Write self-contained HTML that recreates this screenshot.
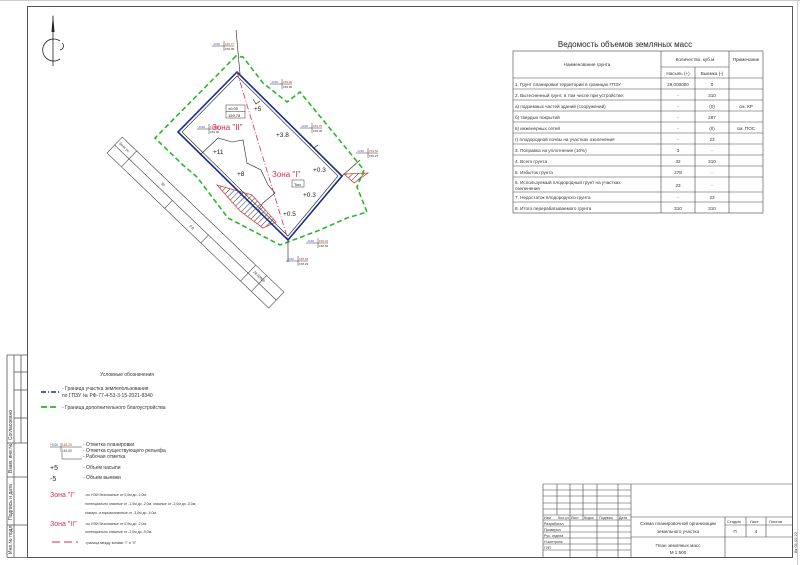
<!DOCTYPE html>
<html><head><meta charset="utf-8"><style>
html,body{margin:0;padding:0;background:#fff;}
svg{display:block;font-family:"Liberation Sans","DejaVu Sans",sans-serif;}
</style></head><body>
<svg width="800" height="565" viewBox="0 0 800 565" xmlns="http://www.w3.org/2000/svg">
<defs>
<pattern id="h" width="4" height="4" patternUnits="userSpaceOnUse" patternTransform="rotate(45)">
<line x1="0" y1="0" x2="0" y2="4" stroke="#333" stroke-width="1"/></pattern>
</defs>
<rect width="800" height="565" fill="#fff"/>
<line x1="0" y1="0.5" x2="800" y2="0.5" stroke="#ccc"/>
<line x1="797.5" y1="0" x2="797.5" y2="565" stroke="#ccc"/>
<rect x="27.5" y="6.5" width="765" height="551" fill="none" stroke="#555" stroke-width="1"/>
<g stroke="#555" stroke-width="0.8" fill="none">
<line x1="7" y1="355" x2="27" y2="355"/>
<line x1="7" y1="355" x2="7" y2="557"/>
<line x1="14" y1="355" x2="14" y2="557"/>
<line x1="21" y1="355" x2="21" y2="443"/>
<line x1="7" y1="557.5" x2="27" y2="557.5"/>
<line x1="14" y1="372" x2="27" y2="372"/>
<line x1="14" y1="390" x2="27" y2="390"/>
<line x1="14" y1="418" x2="27" y2="418"/>
<line x1="7" y1="443" x2="27" y2="443"/>
<line x1="7" y1="477" x2="27" y2="477"/>
<line x1="7" y1="525" x2="27" y2="525"/>
</g>
<g font-size="5" fill="#333">
<text transform="translate(12,440) rotate(-90)">Согласовано</text>
<text transform="translate(12,473) rotate(-90)">Взам. инв.№</text>
<text transform="translate(12,520) rotate(-90)">Подпись и дата</text>
<text transform="translate(12,554) rotate(-90)">Инв.№ подл.</text>
<text transform="translate(797,553) rotate(-90)" font-size="4">Вк 01.02.22</text>
</g>
<g stroke="#222" fill="none" stroke-width="0.8">
<line x1="53" y1="16" x2="53" y2="66"/>
<path d="M60,41 A11,11 0 1 0 60,59"/>
<path d="M62,43 A4,4 0 0 1 60,50"/>
</g>
<path d="M53,14 L51.5,32 L54.5,32 Z" fill="#222"/>

<text x="625" y="47" font-size="8" text-anchor="middle" fill="#222">Ведомость объемов земляных масс</text>
<g stroke="#444" stroke-width="0.6" fill="none">
<rect x="513" y="51" width="250" height="162"/>
<line x1="661" y1="51" x2="661" y2="213"/>
<line x1="729" y1="51" x2="729" y2="213"/>
<line x1="695" y1="67" x2="695" y2="213"/>
<line x1="661" y1="67" x2="729" y2="67"/>
<line x1="513" y1="78" x2="763" y2="78"/>
<line x1="513" y1="89" x2="763" y2="89"/>
<line x1="513" y1="100" x2="763" y2="100"/>
<line x1="513" y1="111" x2="763" y2="111"/>
<line x1="513" y1="122" x2="763" y2="122"/>
<line x1="513" y1="133" x2="763" y2="133"/>
<line x1="513" y1="144" x2="763" y2="144"/>
<line x1="513" y1="155" x2="763" y2="155"/>
<line x1="513" y1="166" x2="763" y2="166"/>
<line x1="513" y1="177" x2="763" y2="177"/>
<line x1="513" y1="192" x2="763" y2="192"/>
<line x1="513" y1="202" x2="763" y2="202"/>
</g>
<g font-size="4.6" fill="#333">
<text x="587" y="66" text-anchor="middle">Наименование грунта</text>
<text x="695" y="61" text-anchor="middle">Количество, куб.м</text>
<text x="746" y="61" text-anchor="middle">Примечание</text>
<text x="678" y="75" text-anchor="middle">Насыпь (+)</text>
<text x="712" y="75" text-anchor="middle">Выемка (-)</text>
<text x="515" y="86">1. Грунт планировки территории в границах ГПЗУ</text>
<text x="515" y="97">2. Вытесненный грунт, в том числе при устройстве:</text>
<text x="515" y="108">а) подземных частей зданий (сооружений)</text>
<text x="515" y="119">б) твердых покрытий</text>
<text x="515" y="130">в) инженерных сетей</text>
<text x="515" y="141">г) плодородной почвы на участках озеленения</text>
<text x="515" y="152">3. Поправка на уплотнение (10%)</text>
<text x="515" y="163">4. Всего грунта</text>
<text x="515" y="174">5. Избыток грунта</text>
<text x="515" y="184">6. Используемый плодородный грунт на участках</text>
<text x="515" y="190">озеленения</text>
<text x="515" y="199">7. Недостаток плодородного грунта</text>
<text x="515" y="210">8. Итого перерабатываемого грунта</text>
<g text-anchor="middle">
<text x="678" y="86">29,000000</text><text x="712" y="86">0</text>
<text x="678" y="97">-</text><text x="712" y="97">310</text>
<text x="678" y="108">-</text><text x="712" y="108">(0)</text><text x="746" y="108">см. КР</text>
<text x="678" y="119">-</text><text x="712" y="119">287</text>
<text x="678" y="130">-</text><text x="712" y="130">(0)</text><text x="746" y="130">см. ПОС</text>
<text x="678" y="141">-</text><text x="712" y="141">23</text>
<text x="678" y="152">3</text><text x="712" y="152">-</text>
<text x="678" y="163">32</text><text x="712" y="163">310</text>
<text x="678" y="174">278</text><text x="712" y="174">-</text>
<text x="678" y="187">23</text><text x="712" y="187">-</text>
<text x="678" y="199">-</text><text x="712" y="199">23</text>
<text x="678" y="210">310</text><text x="712" y="210">310</text>
</g></g>

<polygon points="217,185 252,195 276,222 263,228 240,211" fill="url(#h)" stroke="#e04040" stroke-width="0.8"/>
<polygon points="344,174 368,173 354,183" fill="url(#h)" stroke="#e04040" stroke-width="0.8"/>
<polygon points="236,56 155,138 183,165 197,177 228,218 280,245 320,230 347,218 367,212 357,187 364,170 300,92 287,102 263,83 243,57" fill="none" stroke="#2db52d" stroke-width="1.6" stroke-dasharray="5,3"/>
<polygon points="237,72 178,132 288,240 342,176" fill="none" stroke="#1a2a8a" stroke-width="1.6"/>
<g stroke="#222" stroke-width="0.6" fill="none">
<polygon points="237,76 182,132 288,236 338,176"/>
<polyline points="200,155 218,138 232,142 243,140 247,163 261,170 268,185 275,193 263,203 258,210"/>
<polyline points="253,99 256,104 260,101"/>
<polyline points="310,143 314,148 318,145"/>
<line x1="236" y1="30" x2="240" y2="74"/>
<line x1="288" y1="240" x2="288" y2="262"/>
<line x1="342" y1="176" x2="360" y2="160"/>
</g>
<line x1="237" y1="72" x2="288" y2="240" stroke="#d03060" stroke-width="0.8" stroke-dasharray="6,2,1,2"/>
<g transform="translate(107,153) rotate(43.8)" stroke="#444" stroke-width="0.6" fill="none">
<rect x="0" y="-22" width="224" height="22"/>
<line x1="0" y1="-11" x2="224" y2="-11"/>
<line x1="20" y1="-22" x2="20" y2="0"/>
<line x1="80" y1="-11" x2="80" y2="0"/>
<line x1="130" y1="-11" x2="130" y2="0"/>
<line x1="185" y1="-22" x2="185" y2="0"/>
<line x1="200" y1="-22" x2="200" y2="0"/>
<g font-size="3.5" fill="#333" stroke="none"><text x="2" y="-15">Зона уч.</text><text x="188" y="-15">28,00000</text><text x="60" y="-15">30</text><text x="110" y="-4">0,8</text></g>
</g>
<g font-size="3" stroke-width="0.5">
<g transform="translate(212,46)"><line x1="0" y1="0" x2="22" y2="0" stroke="#333"/><line x1="12" y1="-5" x2="12" y2="5" stroke="#333"/><text x="1" y="-1" fill="#3040c0">-0.00</text><text x="13" y="-1" fill="#d03030">160.77</text><text x="13" y="4" fill="#333">159.95</text></g>
<g transform="translate(270,84)"><line x1="0" y1="0" x2="22" y2="0" stroke="#333"/><line x1="12" y1="-5" x2="12" y2="5" stroke="#333"/><text x="1" y="-1" fill="#3040c0">-0.00</text><text x="13" y="-1" fill="#d03030">159.90</text><text x="13" y="4" fill="#333">159.60</text></g>
<g transform="translate(300,128)"><line x1="0" y1="0" x2="22" y2="0" stroke="#333"/><line x1="12" y1="-5" x2="12" y2="5" stroke="#333"/><text x="1" y="-1" fill="#3040c0">-0.00</text><text x="13" y="-1" fill="#d03030">159.75</text><text x="13" y="4" fill="#333">159.40</text></g>
<g transform="translate(356,153)"><line x1="0" y1="0" x2="22" y2="0" stroke="#333"/><line x1="12" y1="-5" x2="12" y2="5" stroke="#333"/><text x="1" y="-1" fill="#3040c0">-0.00</text><text x="13" y="-1" fill="#d03030">159.52</text><text x="13" y="4" fill="#333">159.27</text></g>
<g transform="translate(306,243)"><line x1="0" y1="0" x2="22" y2="0" stroke="#333"/><line x1="12" y1="-5" x2="12" y2="5" stroke="#333"/><text x="1" y="-1" fill="#3040c0">-0.00</text><text x="13" y="-1" fill="#d03030">159.44</text><text x="13" y="4" fill="#333">158.50</text></g>
<g transform="translate(286,261)"><line x1="0" y1="0" x2="22" y2="0" stroke="#333"/><line x1="12" y1="-5" x2="12" y2="5" stroke="#333"/><text x="1" y="-1" fill="#3040c0">-0.00</text><text x="13" y="-1" fill="#d03030">158.52</text><text x="13" y="4" fill="#333">158.23</text></g>
<g transform="translate(197,129)"><line x1="0" y1="0" x2="22" y2="0" stroke="#333"/><line x1="12" y1="-5" x2="12" y2="5" stroke="#333"/><text x="1" y="-1" fill="#3040c0">-0.00</text><text x="13" y="-1" fill="#d03030">159.66</text><text x="13" y="4" fill="#333">159.00</text></g>
</g>
<g font-size="8" fill="#d03050">
<text x="212" y="130">Зона "II"</text>
<text x="272" y="177">Зона "I"</text>
</g>
<rect x="226" y="105" width="19" height="13" fill="none" stroke="#333" stroke-width="0.5"/>
<line x1="226" y1="111.5" x2="245" y2="111.5" stroke="#333" stroke-width="0.5"/>
<g font-size="4" fill="#222"><text x="228" y="110">±0.00</text><text x="228" y="117">159.78</text></g>
<rect x="292" y="180" width="12" height="7" fill="none" stroke="#333" stroke-width="0.5"/>
<text x="294" y="186" font-size="4" fill="#222">Тип</text>
<g font-size="6.5" fill="#222">
<text x="254" y="111">+5</text><text x="276" y="137">+3.8</text><text x="213" y="154">+11</text>
<text x="237" y="176">+8</text><text x="313" y="172">+0.3</text><text x="303" y="197">+0.3</text>
<text x="283" y="216">+0.5</text>
</g>

<g font-size="5" fill="#333">
<text x="100" y="376">Условные обозначения</text>
<text x="62" y="390">- Граница участка землепользования</text>
<text x="62" y="397">по ГПЗУ № РФ-77-4-53-3-15-2021-8340</text>
<text x="62" y="409">- Граница дополнительного благоустройства</text>
<text x="83" y="446">- Отметка планировки</text>
<text x="83" y="452">- Отметка существующего рельефа</text>
<text x="83" y="458">- Рабочая отметка</text>
<text x="83" y="469">- Объем насыпи</text>
<text x="83" y="479">- Объем выемки</text>
<text x="85" y="496" font-size="3.5">-по НЭИ безопасные от 0,0м до -1,0м,</text>
<text x="85" y="505" font-size="3.5">потенциально опасные от -1,0м до -2,0м, опасные от -2,0м до -3,0м,</text>
<text x="85" y="514" font-size="3.5">пожаро- и взрывоопасные от -3,0м до -4,0м.</text>
<text x="85" y="525" font-size="3.5">-по НЭИ безопасные от 0,0м до -2,0м,</text>
<text x="85" y="533" font-size="3.5">потенциально опасные от -2,0м до -9,0м.</text>
<text x="85" y="544" font-size="3.5">-граница между зонами "I" и "II"</text>
</g>
<line x1="41" y1="392" x2="59" y2="392" stroke="#1a2a8a" stroke-width="1.6" stroke-dasharray="5,2,1,2"/>
<line x1="41" y1="407" x2="59" y2="407" stroke="#2db52d" stroke-width="1.8" stroke-dasharray="6,3"/>
<g font-size="3.2"><text x="50" y="446" fill="#3040c0">+0.00</text><text x="62" y="446" fill="#d03030">162.25</text><text x="62" y="452" fill="#333">161.00</text></g>
<g stroke="#333" stroke-width="0.5"><line x1="50" y1="447" x2="82" y2="447"/><line x1="61" y1="443" x2="61" y2="452"/><line x1="62" y1="452" x2="62" y2="459"/><line x1="62" y1="459" x2="82" y2="459"/></g>
<g font-size="7" fill="#222"><text x="50" y="470">+5</text><text x="50" y="481">-5</text></g>
<g font-size="7" fill="#d03050"><text x="50" y="497">Зона "I"</text><text x="50" y="526">Зона "II"</text></g>
<line x1="52" y1="542" x2="78" y2="542" stroke="#d03050" stroke-width="1" stroke-dasharray="8,4"/>

<g stroke="#444" stroke-width="0.6" fill="none">
<line x1="543" y1="484" x2="792" y2="484"/>
<line x1="543" y1="484" x2="543" y2="558"/>
<line x1="631" y1="484" x2="631" y2="558"/>
<line x1="557" y1="484" x2="557" y2="515"/>
<line x1="570" y1="484" x2="570" y2="558"/>
<line x1="583" y1="484" x2="583" y2="520"/>
<line x1="597" y1="484" x2="597" y2="558"/>
<line x1="618" y1="484" x2="618" y2="558"/>
<line x1="543" y1="490" x2="631" y2="490"/>
<line x1="543" y1="496" x2="631" y2="496"/>
<line x1="543" y1="503" x2="631" y2="503"/>
<line x1="543" y1="509" x2="631" y2="509"/>
<line x1="543" y1="515" x2="631" y2="515"/>
<line x1="543" y1="520" x2="631" y2="520"/>
<line x1="543" y1="526" x2="631" y2="526"/>
<line x1="543" y1="532" x2="631" y2="532"/>
<line x1="543" y1="538" x2="631" y2="538"/>
<line x1="543" y1="544" x2="631" y2="544"/>
<line x1="543" y1="550" x2="631" y2="550"/>
<line x1="631" y1="517" x2="792" y2="517"/>
<line x1="725" y1="517" x2="725" y2="558"/>
<line x1="725" y1="525" x2="792" y2="525"/>
<line x1="631" y1="537" x2="792" y2="537"/>
<line x1="746" y1="517" x2="746" y2="537"/>
<line x1="766" y1="517" x2="766" y2="537"/>
</g>
<g font-size="3.6" fill="#333">
<text x="544" y="519">Изм</text><text x="558" y="519">Кол.уч</text><text x="571" y="519">Лист</text><text x="584" y="519">№док</text><text x="599" y="519">Подпись</text><text x="619" y="519">Дата</text>
<text x="544" y="525">Разработал</text><text x="544" y="531">Проверил</text><text x="544" y="537">Рук. отдела</text><text x="544" y="543">Н.контроль</text><text x="544" y="549">ГИП</text>
<text x="727" y="523" font-size="4">Стадия</text><text x="750" y="523" font-size="4">Лист</text><text x="769" y="523" font-size="4">Листов</text>
</g>
<g font-size="4.6" fill="#333" text-anchor="middle">
<text x="678" y="525">Схема планировочной организации</text>
<text x="678" y="533">земельного участка</text>
<text x="678" y="547">План земляных масс</text>
<text x="678" y="554">М 1:500</text>
<text x="735" y="533">П</text><text x="756" y="533">4</text>
</g>
</svg>
</body></html>
